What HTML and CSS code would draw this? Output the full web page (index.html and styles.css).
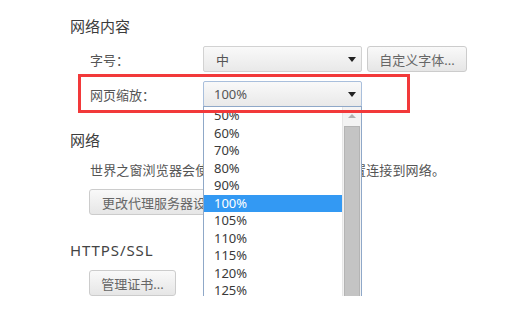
FILE: index.html
```html
<!DOCTYPE html>
<html lang="zh-CN">
<head>
    <meta charset="UTF-8">
    <meta name="viewport" content="width=device-width, initial-scale=1.0">
    <title>网络内容设置</title>
    <link rel="stylesheet" href="styles.css">
</head>
<body>
    <div class="page">
        <h2 class="section-title">网络内容</h2>

        <div class="row">
            <span class="label">字号：</span>
            <div class="select">
                <span class="value">中</span>
                <span class="arrow"></span>
            </div>
            <button class="btn btn-font">自定义字体...</button>
        </div>

        <div class="row row-marked">
            <span class="label">网页缩放：</span>
            <div class="select select-open">
                <span class="value">100%</span>
                <span class="arrow"></span>

                <div class="dropdown">
                    <ul class="options">
                        <li>50%</li>
                        <li>60%</li>
                        <li>70%</li>
                        <li>80%</li>
                        <li>90%</li>
                        <li class="selected">100%</li>
                        <li>105%</li>
                        <li>110%</li>
                        <li>115%</li>
                        <li>120%</li>
                        <li>125%</li>
                    </ul>
                    <div class="scrollbar">
                        <span class="scroll-up"></span>
                        <span class="thumb"></span>
                    </div>
                </div>
            </div>
        </div>

        <h2 class="section-title section-gap">网络</h2>
        <p class="desc">世界之窗浏览器会使用您计算机的系统代理设置连接到网络。</p>
        <button class="btn btn-block">更改代理服务器设置...</button>

        <h2 class="section-title section-gap-lg latin">HTTPS/SSL</h2>
        <button class="btn btn-block btn-cert">管理证书...</button>
    </div>
</body>
</html>
```

FILE: styles.css
```css
body {
    margin: 0;
    background-color: #ffffff;
    font-family: "Noto Sans", "Noto Sans CJK SC", sans-serif;
    color: #555555;
}

.page {
    padding: 16px 0 0 70px;
}

.section-title {
    margin: 0;
    font-size: 15px;
    font-weight: normal;
    line-height: 20px;
    color: #3c3c3c;
}

.section-gap {
    margin-top: 17px;
}

.section-gap-lg {
    margin-top: 25px;
}

.latin {
    letter-spacing: 0.9px;
    color: #444444;
}

.row {
    display: flex;
    align-items: center;
    height: 26px;
    margin-top: 10px;
    padding-left: 20px;
    font-size: 13px;
}

.label {
    width: 113px;
    flex-shrink: 0;
}

/* the red highlight drawn round the zoom row */
.row-marked {
    position: relative;
    width: 320px;
    margin: 2px 0 0 8px;
    padding: 7px 0 6px 12px;
}

.row-marked::after {
    content: "";
    position: absolute;
    inset: 0;
    border: 3px solid #f2393a;
    z-index: 2;
    pointer-events: none;
}

.select {
    position: relative;
    box-sizing: border-box;
    width: 159px;
    height: 26px;
    border: 1px solid #d2d2d2;
    border-radius: 2px;
    background: linear-gradient(#f9f9f9, #e9e9e9);
    display: flex;
    align-items: center;
    padding-left: 12px;
    color: #555555;
}

.select-open {
    border-color: #a9bfdc;
    padding-left: 10px;
}

.arrow {
    position: absolute;
    right: 5px;
    top: 10px;
    width: 0;
    height: 0;
    border-left: 4.5px solid transparent;
    border-right: 4.5px solid transparent;
    border-top: 5px solid #222222;
}

.btn {
    box-sizing: border-box;
    height: 26px;
    border: 1px solid #cccccc;
    border-radius: 3px;
    background: linear-gradient(#f9f9f9, #e6e6e6);
    font-family: inherit;
    font-size: 13px;
    color: #666666;
    padding: 0 12px;
}

.btn-font {
    width: 100px;
    margin-left: 5px;
    padding: 0;
}

.btn-block {
    display: block;
    margin: 10px 0 0 19px;
    white-space: nowrap;
}

.btn-cert {
    width: 87px;
    padding: 0;
}

.desc {
    margin: 11px 0 0 20px;
    font-size: 13px;
    line-height: 18px;
    letter-spacing: 0.15px;
    white-space: nowrap;
}

.dropdown {
    position: absolute;
    top: 100%;
    left: -1px;
    box-sizing: border-box;
    width: 159px;
    height: 195px;
    border: 1px solid #8fa8c8;
    border-bottom: none;
    background-color: #ffffff;
    overflow: hidden;
    z-index: 1;
}

.options {
    list-style: none;
    margin: 0;
    padding: 0;
    width: 138px;
}

.options li {
    height: 17.5px;
    line-height: 17.5px;
    padding-left: 10px;
    color: #3a3a3a;
    font-size: 13px;
}

.options .selected {
    background-color: #3399f3;
    color: #ffffff;
}

.scrollbar {
    position: absolute;
    top: 0;
    right: 0;
    bottom: 0;
    width: 18px;
    background-color: #f3f3f3;
    border-left: 1px solid #e6e6e6;
}

.scroll-up {
    position: absolute;
    top: 7px;
    left: 5px;
    width: 0;
    height: 0;
    border-left: 4px solid transparent;
    border-right: 4px solid transparent;
    border-bottom: 4px solid #b0b0b0;
}

.thumb {
    position: absolute;
    top: 19px;
    left: 1px;
    right: 1px;
    bottom: 0;
    background-color: #c4c4c4;
    border: 1px solid #b4b4b4;
    border-bottom: none;
}
```
